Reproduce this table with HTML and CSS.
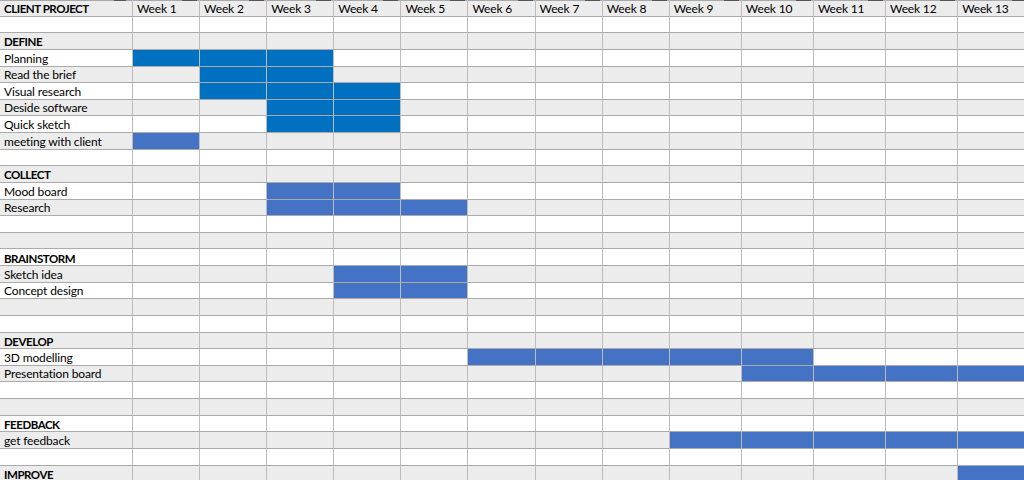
FILE: index.html
```html
<!DOCTYPE html>
<html>
<head>
<meta charset="utf-8">
<title>Client Project</title>
<link rel="stylesheet" href="styles.css">
</head>
<body>
<div class="sheet">
  <div class="r g hd"><span class="h">CLIENT PROJECT</span><span>Week 1</span><span>Week 2</span><span>Week 3</span><span>Week 4</span><span>Week 5</span><span>Week 6</span><span>Week 7</span><span>Week 8</span><span>Week 9</span><span>Week 10</span><span>Week 11</span><span>Week 12</span><span>Week 13</span></div>
  <div class="r"><span></span><i></i><i></i><i></i><i></i><i></i><i></i><i></i><i></i><i></i><i></i><i></i><i></i><i></i></div>
  <div class="r g"><span class="h">DEFINE</span><i></i><i></i><i></i><i></i><i></i><i></i><i></i><i></i><i></i><i></i><i></i><i></i><i></i></div>
  <div class="r"><span>Planning</span><i class="d"></i><i class="d"></i><i class="d"></i><i></i><i></i><i></i><i></i><i></i><i></i><i></i><i></i><i></i><i></i></div>
  <div class="r g"><span>Read the brief</span><i></i><i class="d"></i><i class="d"></i><i></i><i></i><i></i><i></i><i></i><i></i><i></i><i></i><i></i><i></i></div>
  <div class="r"><span>Visual research</span><i></i><i class="d"></i><i class="d"></i><i class="d"></i><i></i><i></i><i></i><i></i><i></i><i></i><i></i><i></i><i></i></div>
  <div class="r g"><span>Deside software</span><i></i><i></i><i class="d"></i><i class="d"></i><i></i><i></i><i></i><i></i><i></i><i></i><i></i><i></i><i></i></div>
  <div class="r"><span>Quick sketch</span><i></i><i></i><i class="d"></i><i class="d"></i><i></i><i></i><i></i><i></i><i></i><i></i><i></i><i></i><i></i></div>
  <div class="r g"><span>meeting with client</span><i class="b"></i><i></i><i></i><i></i><i></i><i></i><i></i><i></i><i></i><i></i><i></i><i></i><i></i></div>
  <div class="r"><span></span><i></i><i></i><i></i><i></i><i></i><i></i><i></i><i></i><i></i><i></i><i></i><i></i><i></i></div>
  <div class="r g"><span class="h">COLLECT</span><i></i><i></i><i></i><i></i><i></i><i></i><i></i><i></i><i></i><i></i><i></i><i></i><i></i></div>
  <div class="r"><span>Mood board</span><i></i><i></i><i class="b"></i><i class="b"></i><i></i><i></i><i></i><i></i><i></i><i></i><i></i><i></i><i></i></div>
  <div class="r g"><span>Research</span><i></i><i></i><i class="b"></i><i class="b"></i><i class="b"></i><i></i><i></i><i></i><i></i><i></i><i></i><i></i><i></i></div>
  <div class="r"><span></span><i></i><i></i><i></i><i></i><i></i><i></i><i></i><i></i><i></i><i></i><i></i><i></i><i></i></div>
  <div class="r g"><span></span><i></i><i></i><i></i><i></i><i></i><i></i><i></i><i></i><i></i><i></i><i></i><i></i><i></i></div>
  <div class="r"><span class="h">BRAINSTORM</span><i></i><i></i><i></i><i></i><i></i><i></i><i></i><i></i><i></i><i></i><i></i><i></i><i></i></div>
  <div class="r g"><span>Sketch idea</span><i></i><i></i><i></i><i class="b"></i><i class="b"></i><i></i><i></i><i></i><i></i><i></i><i></i><i></i><i></i></div>
  <div class="r"><span>Concept design</span><i></i><i></i><i></i><i class="b"></i><i class="b"></i><i></i><i></i><i></i><i></i><i></i><i></i><i></i><i></i></div>
  <div class="r g"><span></span><i></i><i></i><i></i><i></i><i></i><i></i><i></i><i></i><i></i><i></i><i></i><i></i><i></i></div>
  <div class="r"><span></span><i></i><i></i><i></i><i></i><i></i><i></i><i></i><i></i><i></i><i></i><i></i><i></i><i></i></div>
  <div class="r g"><span class="h">DEVELOP</span><i></i><i></i><i></i><i></i><i></i><i></i><i></i><i></i><i></i><i></i><i></i><i></i><i></i></div>
  <div class="r"><span>3D modelling</span><i></i><i></i><i></i><i></i><i></i><i class="b"></i><i class="b"></i><i class="b"></i><i class="b"></i><i class="b"></i><i></i><i></i><i></i></div>
  <div class="r g"><span>Presentation board</span><i></i><i></i><i></i><i></i><i></i><i></i><i></i><i></i><i></i><i class="b"></i><i class="b"></i><i class="b"></i><i class="b"></i></div>
  <div class="r"><span></span><i></i><i></i><i></i><i></i><i></i><i></i><i></i><i></i><i></i><i></i><i></i><i></i><i></i></div>
  <div class="r g"><span></span><i></i><i></i><i></i><i></i><i></i><i></i><i></i><i></i><i></i><i></i><i></i><i></i><i></i></div>
  <div class="r"><span class="h">FEEDBACK</span><i></i><i></i><i></i><i></i><i></i><i></i><i></i><i></i><i></i><i></i><i></i><i></i><i></i></div>
  <div class="r g"><span>get feedback</span><i></i><i></i><i></i><i></i><i></i><i></i><i></i><i></i><i class="b"></i><i class="b"></i><i class="b"></i><i class="b"></i><i class="b"></i></div>
  <div class="r"><span></span><i></i><i></i><i></i><i></i><i></i><i></i><i></i><i></i><i></i><i></i><i></i><i></i><i></i></div>
  <div class="r g"><span class="h">IMPROVE</span><i></i><i></i><i></i><i></i><i></i><i></i><i></i><i></i><i></i><i></i><i></i><i></i><i class="b"></i></div>
</div>
</body>
</html>
```

FILE: styles.css
```css
html, body {
  margin: 0;
  padding: 0;
  background: #fff;
  overflow: hidden;
}

body {
  font-family: Lato, "Liberation Sans", sans-serif;
  font-size: 12px;
  color: #000;
}

.sheet {
  display: grid;
  grid-template-rows: repeat(29, 16.63px);
  width: 1032px;
}

.r {
  display: grid;
  grid-template-columns: 133px repeat(8, 67.1px) repeat(5, 72.1px);
  background: #fff;
}

.r.g {
  background: #ececec;
}

.r > span,
.r > i {
  position: relative;
  display: flex;
  align-items: flex-end;
  padding: 0 0 1px 4px;
  border-right: 1px solid #bcbcbc;
  border-bottom: 1px solid #aaaaaa;
  font-style: normal;
  font-weight: normal;
  letter-spacing: -0.15px;
  line-height: 1;
  white-space: nowrap;
  overflow: hidden;
  min-width: 0;
}

.r > .h {
  font-weight: bold;
  font-size: 11.5px;
  letter-spacing: -0.45px;
}

.r > .d {
  background: #0070c0;
}

.r > .b {
  background: #4472c4;
}

.hd > span {
  box-shadow: inset 0 1px 0 #a9a9a9;
}

.hd > span::after {
  content: "";
  position: absolute;
  top: 0;
  right: 2px;
  width: 15px;
  height: 1px;
  background: #555;
}

.hd > span:first-child::after {
  right: 6px;
  width: 12px;
}
```
